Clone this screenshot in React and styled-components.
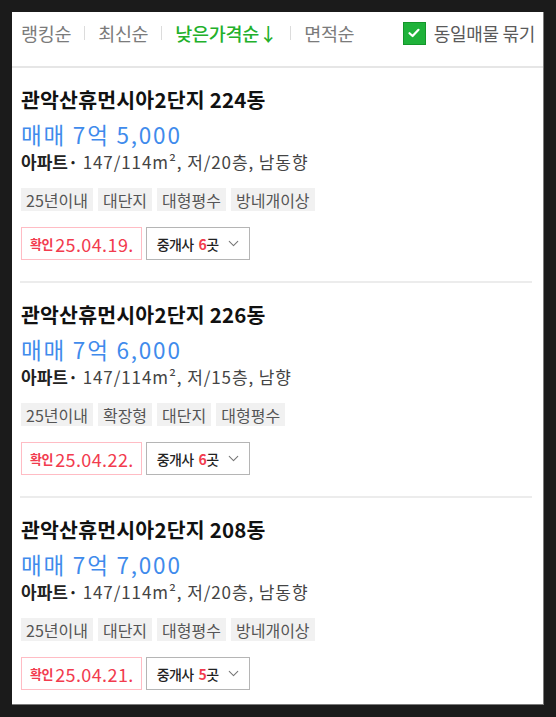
import React from 'react'
import styled, { createGlobalStyle } from 'styled-components'
import { ChevronDown } from 'lucide-react'

const GlobalStyle = createGlobalStyle`
body {
  margin: 0;
  background-color: #1b1b1b;
  font-family: "Noto Sans CJK KR", "Noto Sans", sans-serif;
}
`;

const Panel = styled.div`
margin: 12px 0 0 12px;
width: 531px;
height: 692px;
background-color: #fff;
border-right: 1px solid #7a7a7a;
border-bottom: 1px solid #7a7a7a;
overflow: hidden;
`;

const Header = styled.div`
height: 56px;
box-sizing: border-box;
display: flex;
align-items: center;
justify-content: space-between;
padding: 0 8px 12px 9px;
border-bottom: 2px solid #e6e6e6;
`;

const Sorts = styled.div`
display: flex;
align-items: center;
gap: 13px;
`;

const Sort = styled.span`
font-size: 18.5px;
letter-spacing: -0.3px;
color: ${p => (p.$active ? '#22b02a' : '#7b7b7b')};
font-weight: ${p => (p.$active ? 500 : 400)};
`;

const Bar = styled.span`
width: 1px;
height: 14px;
background-color: #dcdcdc;
`;

const Group = styled.label`
display: flex;
align-items: center;
gap: 8px;
font-size: 18px;
letter-spacing: -0.3px;
color: #5a5a5a;
`;

const Check = styled.span`
width: 23px;
height: 23px;
box-sizing: border-box;
border: 1px solid #14962a;
background-color: #1fb23a;
display: flex;
align-items: center;
justify-content: center;
`;

const List = styled.div`
padding: 0 11px 0 8px;
`;

const Item = styled.div`
padding: 18px 0 21px 1px;
border-bottom: 2px solid #ececec;
`;

const Title = styled.div`
font-size: 20.5px;
line-height: 26px;
font-weight: 700;
letter-spacing: 0.2px;
color: #111;
`;

const Price = styled.div`
margin-top: 9px;
font-size: 22.5px;
line-height: 26px;
letter-spacing: 1.8px;
color: #3f8bec;
`;

const Info = styled.div`
margin-top: 5px;
font-size: 17px;
line-height: 20px;
letter-spacing: 0.9px;
color: #444;
b {
  font-weight: 700;
  color: #222;
  letter-spacing: 0;
}
`;

const Tags = styled.div`
margin-top: 16px;
display: flex;
gap: 5px;
`;

const Tag = styled.span`
height: 23px;
padding: 0 5px;
display: flex;
align-items: center;
font-size: 16px;
color: #555;
background-color: #f1f1f1;
`;

const Actions = styled.div`
margin-top: 16px;
display: flex;
gap: 4px;
`;

const Confirm = styled.span`
height: 33px;
box-sizing: border-box;
padding: 0 7px 0 8px;
display: flex;
align-items: center;
gap: 2px;
border: 1px solid #ffbcc4;
color: #f23b4e;
font-size: 18px;
letter-spacing: 0.4px;
small {
  font-size: 13px;
  font-weight: 700;
  letter-spacing: -0.4px;
}
`;

const Broker = styled.button`
height: 33px;
box-sizing: border-box;
padding: 0 7px 0 10px;
display: flex;
align-items: center;
gap: 7px;
border: 1px solid #b5b5b5;
background-color: #fff;
font-family: inherit;
font-size: 14px;
font-weight: 500;
letter-spacing: -0.6px;
color: #222;
`;

const Count = styled.span`
margin-left: 5px;
em {
  font-style: normal;
  font-weight: 700;
  color: #f23b4e;
}
`;

const listings = [
  { dong: '224동', price: '7억 5,000', floor: '저/20층', dir: '남동향', tags: ['25년이내', '대단지', '대형평수', '방네개이상'], date: '25.04.19.', brokers: 6 },
  { dong: '226동', price: '7억 6,000', floor: '저/15층', dir: '남향', tags: ['25년이내', '확장형', '대단지', '대형평수'], date: '25.04.22.', brokers: 6 },
  { dong: '208동', price: '7억 7,000', floor: '저/20층', dir: '남동향', tags: ['25년이내', '대단지', '대형평수', '방네개이상'], date: '25.04.21.', brokers: 5 },
];

const sorts = ['랭킹순', '최신순', '낮은가격순↓', '면적순'];

const App = () => {
  return (
    <>
      <GlobalStyle />
      <Panel>
        <Header>
          <Sorts>
            {sorts.map((s, i) => (
              <React.Fragment key={s}>
                {i > 0 && <Bar />}
                <Sort $active={i === 2}>{s}</Sort>
              </React.Fragment>
            ))}
          </Sorts>
          <Group>
            <Check>
              <svg width="14" height="14" viewBox="0 0 14 14">
                <path d="M2.5 7.2 L5.6 10 L11.5 3.8" fill="none" stroke="#fff" strokeWidth="2.2" strokeLinecap="round" strokeLinejoin="round" />
              </svg>
            </Check>
            동일매물 묶기
          </Group>
        </Header>
        <List>
          {listings.map(l => (
            <Item key={l.dong}>
              <Title>관악산휴먼시아2단지 {l.dong}</Title>
              <Price>매매 {l.price}</Price>
              <Info><b>아파트·</b> 147/114m², {l.floor}, {l.dir}</Info>
              <Tags>
                {l.tags.map(t => <Tag key={t}>{t}</Tag>)}
              </Tags>
              <Actions>
                <Confirm><small>확인</small>{l.date}</Confirm>
                <Broker>
                  <span>중개사<Count><em>{l.brokers}</em>곳</Count></span>
                  <ChevronDown size={17} color="#777" strokeWidth={1.5} />
                </Broker>
              </Actions>
            </Item>
          ))}
        </List>
      </Panel>
    </>
  )
}

export default App
